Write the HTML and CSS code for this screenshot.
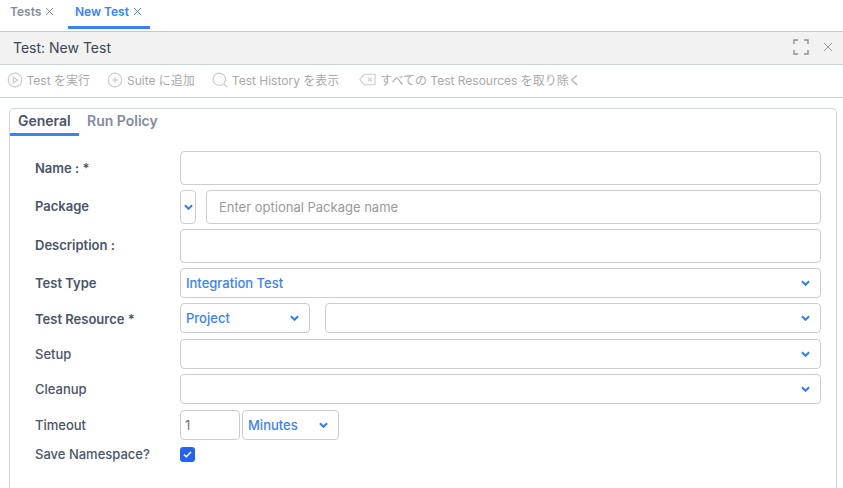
FILE: index.html
```html
<!DOCTYPE html>
<html lang="ja">
<head>
    <meta charset="UTF-8">
    <title>Test: New Test</title>
    <link rel="stylesheet" href="styles.css">
</head>
<body>
    <div class="top-tabs">
        <div class="top-tab">Tests <svg class="tab-x" viewBox="0 0 10 10"><path d="M1 1l8 8M9 1l-8 8"/></svg></div>
        <div class="top-tab active">New Test <svg class="tab-x" viewBox="0 0 10 10"><path d="M1 1l8 8M9 1l-8 8"/></svg></div>
    </div>

    <div class="panel-header">
        <span class="panel-title">Test: New Test</span>
        <div class="panel-icons">
            <svg class="icon-expand" viewBox="0 0 16 16"><path d="M1 5V1h4M11 1h4v4M15 11v4h-4M5 15H1v-4"/></svg>
            <svg class="icon-close" viewBox="0 0 10 10"><path d="M1 1l8 8M9 1l-8 8"/></svg>
        </div>
    </div>

    <div class="toolbar">
        <div class="tool">
            <svg class="tool-icon" viewBox="0 0 16 16"><circle cx="8" cy="8" r="6.8"/><path d="M6.3 5.2l4.4 2.8-4.4 2.8z"/></svg>
            Test を実行
        </div>
        <div class="tool">
            <svg class="tool-icon" viewBox="0 0 16 16"><circle cx="8" cy="8" r="6.8"/><path d="M8 5v6M5 8h6"/></svg>
            Suite に追加
        </div>
        <div class="tool">
            <svg class="tool-icon" viewBox="0 0 16 16"><circle cx="7.3" cy="7.3" r="6.2"/><path d="M11.8 11.8l3.2 3.2"/></svg>
            Test History を表示
        </div>
        <div class="tool clear-all">
            <svg class="tool-icon wide" viewBox="0 0 18 13"><path d="M5.5 1H17v11H5.5L1 6.5z"/><path d="M9.5 4.5l4 4M13.5 4.5l-4 4"/></svg>
            すべての Test Resources を取り除く
        </div>
    </div>

    <div class="card">
        <div class="card-tabs">
            <div class="card-tab active">General</div>
            <div class="card-tab">Run Policy</div>
        </div>

        <form class="form">
            <div class="row tall">
                <label class="strong">Name : *</label>
                <input class="field grow" type="text">
            </div>
            <div class="row tall">
                <label class="strong raised">Package</label>
                <div class="select tiny">
                    <svg class="chevron" viewBox="0 0 10 6"><path d="M1 1l4 4 4-4"/></svg>
                </div>
                <input class="field grow package" type="text" placeholder="Enter optional Package name">
            </div>
            <div class="row tall">
                <label class="strong raised">Description :</label>
                <input class="field grow" type="text">
            </div>
            <div class="row">
                <label class="strong">Test Type</label>
                <div class="select grow">
                    <span>Integration Test</span>
                    <svg class="chevron" viewBox="0 0 10 6"><path d="M1 1l4 4 4-4"/></svg>
                </div>
            </div>
            <div class="row">
                <label class="strong lowered">Test Resource *</label>
                <div class="select resource">
                    <span>Project</span>
                    <svg class="chevron" viewBox="0 0 10 6"><path d="M1 1l4 4 4-4"/></svg>
                </div>
                <div class="select grow resource-name">
                    <span></span>
                    <svg class="chevron" viewBox="0 0 10 6"><path d="M1 1l4 4 4-4"/></svg>
                </div>
            </div>
            <div class="row">
                <label>Setup</label>
                <div class="select grow">
                    <span></span>
                    <svg class="chevron" viewBox="0 0 10 6"><path d="M1 1l4 4 4-4"/></svg>
                </div>
            </div>
            <div class="row">
                <label>Cleanup</label>
                <div class="select grow">
                    <span></span>
                    <svg class="chevron" viewBox="0 0 10 6"><path d="M1 1l4 4 4-4"/></svg>
                </div>
            </div>
            <div class="row">
                <label>Timeout</label>
                <input class="field timeout" type="text" value="1">
                <div class="select unit">
                    <span>Minutes</span>
                    <svg class="chevron" viewBox="0 0 10 6"><path d="M1 1l4 4 4-4"/></svg>
                </div>
            </div>
            <div class="row check-row">
                <label>Save Namespace?</label>
                <div class="checkbox">
                    <svg viewBox="0 0 10 8"><path d="M1 4.2l2.6 2.4L9 1.2"/></svg>
                </div>
            </div>
        </form>
    </div>
</body>
</html>
```

FILE: styles.css
```css
html, body {
    height: 488px;
    overflow: hidden;
}

body {
    font-family: Inter, "Noto Sans CJK JP", sans-serif;
    font-size: 13px;
    color: #4a5568;
    background-color: white;
    margin: 0;
}

.top-tabs {
    display: flex;
    height: 28px;
    padding-left: 3px;
    margin-bottom: 3px;
}

.top-tab {
    display: flex;
    align-items: center;
    gap: 4px;
    box-sizing: border-box;
    height: 29px;
    padding: 0 7px 3px 7px;
    border-bottom: 3px solid transparent;
    font-size: 12px;
    font-weight: 600;
    color: #858b9c;
}

.top-tab.active {
    margin-left: 6.5px;
    padding-right: 8.5px;
    color: #3b82f6;
    border-bottom-color: #3b82f6;
}

.tab-x {
    width: 9px;
    height: 9px;
    fill: none;
    stroke: currentColor;
    stroke-width: 1;
}

.panel-header {
    display: flex;
    justify-content: space-between;
    align-items: center;
    box-sizing: border-box;
    height: 34px;
    padding: 0 10px 2px 13px;
    background-color: #f2f2f2;
    border-top: 1px solid #c4c6c8;
    border-bottom: 1px solid #c8d4d4;
}

.panel-title {
    font-size: 14px;
    color: #3d4450;
}

.panel-icons {
    display: flex;
    align-items: center;
    gap: 14px;
}

.icon-expand {
    width: 16px;
    height: 16px;
    fill: none;
    stroke: #8a8f96;
    stroke-width: 1.4;
}

.icon-close {
    width: 10px;
    height: 10px;
    fill: none;
    stroke: #9a9ea4;
    stroke-width: 1;
}

.toolbar {
    display: flex;
    align-items: center;
    gap: 17px;
    box-sizing: border-box;
    height: 33px;
    padding: 0 0 3px 6.5px;
    border-bottom: 1px solid #c8d4d4;
    font-size: 12px;
    color: #a9a9a9;
}

.tool {
    display: flex;
    align-items: center;
    gap: 4px;
}

.tool.clear-all {
    margin-left: 3px;
}

.tool-icon {
    width: 16px;
    height: 16px;
    fill: none;
    stroke: #cccccc;
    stroke-width: 1.2;
}

.tool-icon.wide {
    width: 17px;
    height: 13px;
}

.card {
    box-sizing: border-box;
    height: 400px;
    margin: 10px 6px 0 9px;
    border: 1px solid #d4d5d8;
    border-radius: 5px;
}

.card-tabs {
    display: flex;
    height: 27px;
}

.card-tab {
    padding: 3px 8px 0 8px;
    font-size: 14px;
    font-weight: 600;
    color: #858b9c;
}

.card-tab.active {
    box-sizing: border-box;
    height: 27px;
    width: 69px;
    color: #4a5568;
    border-bottom: 3px solid #3b82f6;
}

.form {
    display: flex;
    flex-direction: column;
    padding: 15px 15px 0 25px;
}

.row {
    display: flex;
    align-items: center;
    height: 30px;
    margin-bottom: 5.4px;
}

.row.tall {
    height: 34px;
    margin-bottom: 5px;
}

.row.check-row {
    height: 15px;
    margin-top: 1.6px;
}

label {
    flex: 0 0 145px;
    font-weight: 500;
    color: #4a5568;
}

label.strong {
    font-weight: 600;
}

.raised {
    margin-bottom: 2px;
}

.lowered {
    margin-top: 2px;
}

.field, .select {
    box-sizing: border-box;
    height: 100%;
    background: white;
    border: 1px solid #cbccd6;
    border-radius: 4px;
}

.field {
    padding: 0 12px;
    font-family: inherit;
    font-size: 13px;
    outline: none;
}

.field::placeholder {
    color: #9a9a9a;
    opacity: 1;
}

.grow {
    flex: 1;
    min-width: 0;
}

.select {
    display: flex;
    align-items: center;
    justify-content: space-between;
    padding: 0 10px 0 5px;
    font-weight: 500;
    color: #3b82f6;
}

.select.tiny {
    flex: 0 0 16px;
    padding: 0;
    justify-content: center;
}

.field.package {
    margin-left: 10px;
}

.select.resource {
    flex: 0 0 130px;
}

.select.resource-name {
    margin-left: 15px;
}

.field.timeout {
    flex: 0 0 60px;
    width: 60px;
    padding: 0 4px;
    color: #6b7280;
}

.select.unit {
    flex: 0 0 97px;
    margin-left: 2px;
}

.chevron {
    width: 9px;
    height: 6px;
    fill: none;
    stroke: #2f7fee;
    stroke-width: 2.2;
}

.checkbox {
    display: flex;
    align-items: center;
    justify-content: center;
    width: 15px;
    height: 15px;
    background-color: #2563eb;
    border-radius: 3px;
}

.checkbox svg {
    width: 9px;
    height: 7px;
    fill: none;
    stroke: white;
    stroke-width: 1.8;
}
```
